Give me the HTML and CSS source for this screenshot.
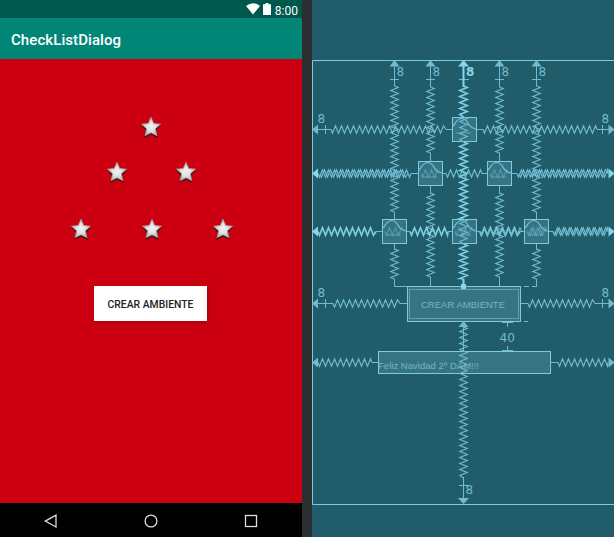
FILE: index.html
```html
<!DOCTYPE html>
<html lang="es">
<head>
<meta charset="utf-8">
<title>CheckListDialog</title>
<link rel="stylesheet" href="styles.css">
</head>
<body>
<svg class="defs" aria-hidden="true">
  <defs>
    <radialGradient id="metal"><stop offset="0" stop-color="#f2f2f2"/><stop offset=".5" stop-color="#e2e2e2"/><stop offset="1" stop-color="#b5b5b5"/></radialGradient>
    <symbol id="star" viewBox="0 0 24 24">
      <path class="star-shadow" d="M12 4l3 5 7 1-4.500 5 1 7.800L12 19.500l-6.500 3.300 1-7.800L2 10 9 9z"/>
      <path class="star-face" d="M12 2.300l2.700 6.200 6.800.7-5.100 4.600 1.500 6.900-5.900-2.900-5.900 2.900 1.500-6.900-5.100-4.600 6.800-.7z"/>
    </symbol>
    <symbol id="image" viewBox="0 0 25 25">
      <rect class="box" x=".5" y=".5" width="24" height="24"/>
      <path class="trace" d="M1 9C4 6 5 1.500 9.500 1.500C15 1.500 15 6 18 9C20 11 22 11.500 24 12"/>
      <path class="base" d="M4 15h15v2H4z"/>
    </symbol>
  </defs>
</svg>
<main class="editor">
  <section class="phone">
    <div class="status">
      <svg class="wifi" viewBox="0 0 14 12"><path d="M0 3Q7-2.600 14 3L7 11.500z"/></svg>
      <svg class="battery" viewBox="0 0 8 12"><path d="M2.500 0h3v1.300H8V12H0V1.300h2.500z"/></svg>
      <span>8:00</span>
    </div>
    <header class="appbar">CheckListDialog</header>
    <div class="content">
      <div class="stars top"><svg><use href="#star"/></svg></div>
      <div class="stars middle"><svg><use href="#star"/></svg><svg><use href="#star"/></svg></div>
      <div class="stars bottom"><svg><use href="#star"/></svg><svg><use href="#star"/></svg><svg><use href="#star"/></svg></div>
      <button class="create">CREAR AMBIENTE</button>
    </div>
    <nav class="nav">
      <svg viewBox="0 0 16 16"><path d="M13 2.200v11.800L2.300 8.100z"/></svg>
      <svg viewBox="0 0 16 16"><circle cx="8" cy="8" r="5.900"/></svg>
      <svg viewBox="0 0 16 16"><rect x="2.500" y="2.500" width="11" height="11"/></svg>
    </nav>
  </section>
  <div class="divider"></div>
  <section class="blueprint">
    <svg viewBox="312 0 302 537" width="302" height="537">
      <path class="edge" d="M614 60.500H312.500V504.500H614"/>
      <use href="#image" x="452" y="117" width="25" height="25"/>
      <use href="#image" x="418" y="161" width="25" height="25"/>
      <use href="#image" x="487" y="161" width="25" height="25"/>
      <use href="#image" x="382" y="219" width="25" height="25"/>
      <use href="#image" x="452" y="219" width="25" height="25"/>
      <use href="#image" x="524" y="219" width="25" height="25"/>
      <rect class="box" x="407.500" y="286.500" width="113" height="35"/>
      <rect class="inner" x="409.500" y="289.500" width="109" height="29"/>
      <rect class="box" x="378.500" y="351.500" width="172" height="22"/>
      <text class="label" x="421" y="308" textLength="84">CREAR AMBIENTE</text>
      <text class="label small" x="378" y="369" textLength="101">Feliz Navidad 2º DAM!!!</text>
      <g id="springs"></g>
      <path class="line" d="M394.500 66V86M394.500 212V219M394.500 244V250M394.500 279V286.500H408
        M430.500 66V87M430.500 153V161M430.500 186V194M430.500 277V286
        M499.500 66V87M499.500 153V161M499.500 186V194M499.500 277V286
        M536.500 66V86M536.500 212V219M536.500 244V250M536.500 279V286.500
        M390 79.500h9M426 79.500h9M459 79.500h10M495 79.500h9M532 79.500h9
        M318 129.500H331M446 129.500H452M477 129.500H483M597 129.500H609M325.500 125v9M602.500 125v9
        M411 173.500H418M443 173.500H446M482 173.500H487M512 173.500H517
        M376 231.500H382M407 231.500H410M448 231.500H452M477 231.500H480M520 231.500H524M549 231.500H553
        M318 303.500H333M400 303.500H407M521 303.500H528M595 303.500H609M325.500 299v9M602.500 299v9
        M372 362.500H378M551 362.500H558M463.500 321V352M463.500 477V499M459 485.500h10
        M507.500 322V327M507.500 346V351M502 322.500h11M502 350.500h11"/>
      <path class="line dashed" d="M524 286.500h13M524 321.500h4"/>
      <path class="line strong" d="M463.500 66V87M463.500 279V286"/>
      <path class="arrow" d="M389.500 66.500l5-6.500 5 6.500zM425.500 66.500l5-6.500 5 6.500zM494.500 66.500l5-6.500 5 6.500zM531.500 66.500l5-6.500 5 6.500z
        M318 124.500v10l-6-5zM608.500 124.500v10l6-5zM318 298.500v10l-6-5zM608.500 298.500v10l6-5z
        M318 357.500v10l-6-5zM608.500 357.500v10l6-5zM458.500 327l5-6 5 6zM458 498h11l-5.500 6z"/>
      <path class="arrow bright" d="M458 66.500l5.500-6.500 5.500 6.500zM318 168.500v10l-6-5zM608.500 168.500v10l6-5zM318 226.500v10l-6-5zM608.500 226.500v10l6-5zM461 284h5v5h-5z"/>
      <g class="margin">
        <text x="396.500" y="75.500">8</text><text x="432.500" y="75.500">8</text><text class="bold" x="466" y="75.500">8</text>
        <text x="501.500" y="75.500">8</text><text x="538.500" y="75.500">8</text>
        <text x="317.500" y="123">8</text><text x="601.500" y="123">8</text>
        <text x="317.500" y="297">8</text><text x="601.500" y="297">8</text>
        <text x="465.500" y="494">8</text><text x="499.500" y="342">40</text>
      </g>
    </svg>
  </section>
</main>
<script src="springs.js"></script>
</body>
</html>
```

FILE: styles.css
```css
* { box-sizing: border-box; }
body { margin: 0; overflow: hidden; font-family: Roboto, sans-serif; }
.defs { position: absolute; width: 0; height: 0; }
.editor { display: flex; width: 614px; height: 537px; }
.phone { width: 302px; display: flex; flex-direction: column; }
.status { height: 18px; flex: none; display: flex; justify-content: flex-end; background: #00574b; color: #fff; padding: 3px 4px 0 0; font-size: 12px; line-height: 17px; }
.status svg { fill: #fff; flex: none; }
.wifi { width: 14px; height: 12px; margin-right: 3px; }
.battery { width: 8px; height: 12px; margin-right: 4px; }
.appbar { height: 41px; flex: none; background: #008577; color: #fff; padding-left: 11px; font-size: 15px; font-weight: 500; line-height: 44px; letter-spacing: .08px; }
.content { height: 444px; flex: none; background: #cc0010; display: flex; flex-direction: column; }
.stars { display: flex; height: 24px; }
.stars svg { width: 24px; height: 24px; flex: none; }
.top { margin: 56px 0 0 138.500px; }
.middle { margin: 21px 0 0 104.500px; gap: 45px; }
.bottom { margin: 33px 0 0 68.500px; gap: 47px; }
.star-face { fill: url(#metal); stroke: #a5a09c; stroke-width: .8; }
.star-shadow { fill: #30100f; }
.create { margin: 45px 0 0 94px; width: 113px; height: 35px; padding: 2px 0 0; border: 0; background: #fff; color: #222; font: 500 10.400px Roboto, sans-serif; box-shadow: 1px 1px 4px rgba(60, 0, 0, .3); white-space: nowrap; }
.nav { flex: 1; background: #000; display: flex; padding: 10px 0 0 42.500px; gap: 84px; }
.nav svg { width: 16px; height: 16px; flex: none; fill: none; stroke: #ddd; stroke-width: 1.300; }
.divider { width: 10px; background: #2c2f30; }
.blueprint { width: 302px; background: #215c6b; }
.blueprint svg { display: block; }
.edge { fill: none; stroke: #7dcbe0; }
.box { fill: #367484; stroke: #7dcbe0; }
.inner { fill: none; stroke: #5ba3b5; }
.trace { fill: none; stroke: #72bfd3; stroke-width: 1.200; }
.base { fill: #5c9aab; opacity: .6; }
.line { fill: none; stroke: #72bbcf; }
.strong { stroke: #88d5e9; stroke-width: 2; }
.dashed { stroke-dasharray: 5 3; }
.spring { fill: none; stroke: #72bbcf; stroke-width: 1.150; }
.spring.heavy { stroke: #7fcce0; stroke-width: 1.700; }
.spring.inside { opacity: .5; }
.arrow { fill: #72bbcf; }
.arrow.bright { fill: #88d5e9; }
.label { fill: #73b5c6; font: 9.500px "Liberation Sans", sans-serif; }
.margin text { fill: #72bbcf; font: 12px "DejaVu Sans", sans-serif; }
.margin .bold { fill: #88d5e9; font-weight: bold; }
```

FILE: springs.js
```js
// axis, cross position, start, end, phase, style
const springs = [
  ['v', 394.5, 86, 212, 0, ''], ['v', 394.5, 249, 279, 0, ''],
  ['v', 536.5, 86, 212, 0, ''], ['v', 536.5, 249, 279, 0, ''],
  ['v', 430.5, 87, 153, 0, ''], ['v', 430.5, 193, 277, 0, ''],
  ['v', 499.5, 87, 153, 0, ''], ['v', 499.5, 193, 277, 0, ''],
  ['v', 463.5, 86, 117, 0, 'heavy'], ['v', 463.5, 142, 219, 0, 'heavy'],
  ['v', 463.5, 244, 279, 0, 'heavy'], ['v', 463.5, 117, 142, 0, ''],
  ['v', 463.5, 219, 244, 0, ''], ['v', 463.5, 327, 478, 0, ''],
  ['h', 129.5, 331, 446, 0, ''], ['h', 129.5, 483, 597, 0, ''],
  ['h', 173.5, 318, 411, 0, ''], ['h', 173.5, 318, 408, 2, ''],
  ['h', 173.5, 446, 482, 0, ''],
  ['h', 173.5, 517, 608, 0, ''], ['h', 173.5, 517, 608, 2, ''],
  ['h', 231.5, 318, 376, 0, 'heavy'],
  ['h', 231.5, 410, 448, 0, 'heavy'],
  ['h', 231.5, 480, 520, 0, 'heavy'], ['h', 231.5, 478, 522, 1.5, ''],
  ['h', 231.5, 553, 608, 0, ''], ['h', 231.5, 553, 608, 1.7, ''],
  ['h', 173.5, 421, 439, 0, 'inside'], ['h', 173.5, 490, 508, 0, 'inside'],
  ['h', 231.5, 385, 404, 0, 'inside'], ['h', 231.5, 455, 474, 0, 'inside'],
  ['h', 231.5, 527, 546, 0, 'inside'], ['h', 231.5, 527, 546, 2, 'inside'],
  ['h', 303.5, 333, 400, 0, ''], ['h', 303.5, 528, 595, 0, ''],
  ['h', 362.5, 318, 372, 0, ''], ['h', 362.5, 558, 608, 0, '']
];
const layer = document.getElementById('springs');
for (const [axis, cross, start, end, phase, style] of springs) {
  const points = [[start + phase, cross]];
  let side = 1;
  for (let p = start + phase + 1.5; p < end; p += 3) {
    points.push([p, cross + side * 3.7]);
    side = -side;
  }
  points.push([end, cross]);
  const line = document.createElementNS('http://www.w3.org/2000/svg', 'polyline');
  line.setAttribute('points', points.map(([a, b]) => axis === 'h' ? `${a},${b}` : `${b},${a}`).join(' '));
  line.setAttribute('class', `spring ${style}`);
  layer.appendChild(line);
}
```
